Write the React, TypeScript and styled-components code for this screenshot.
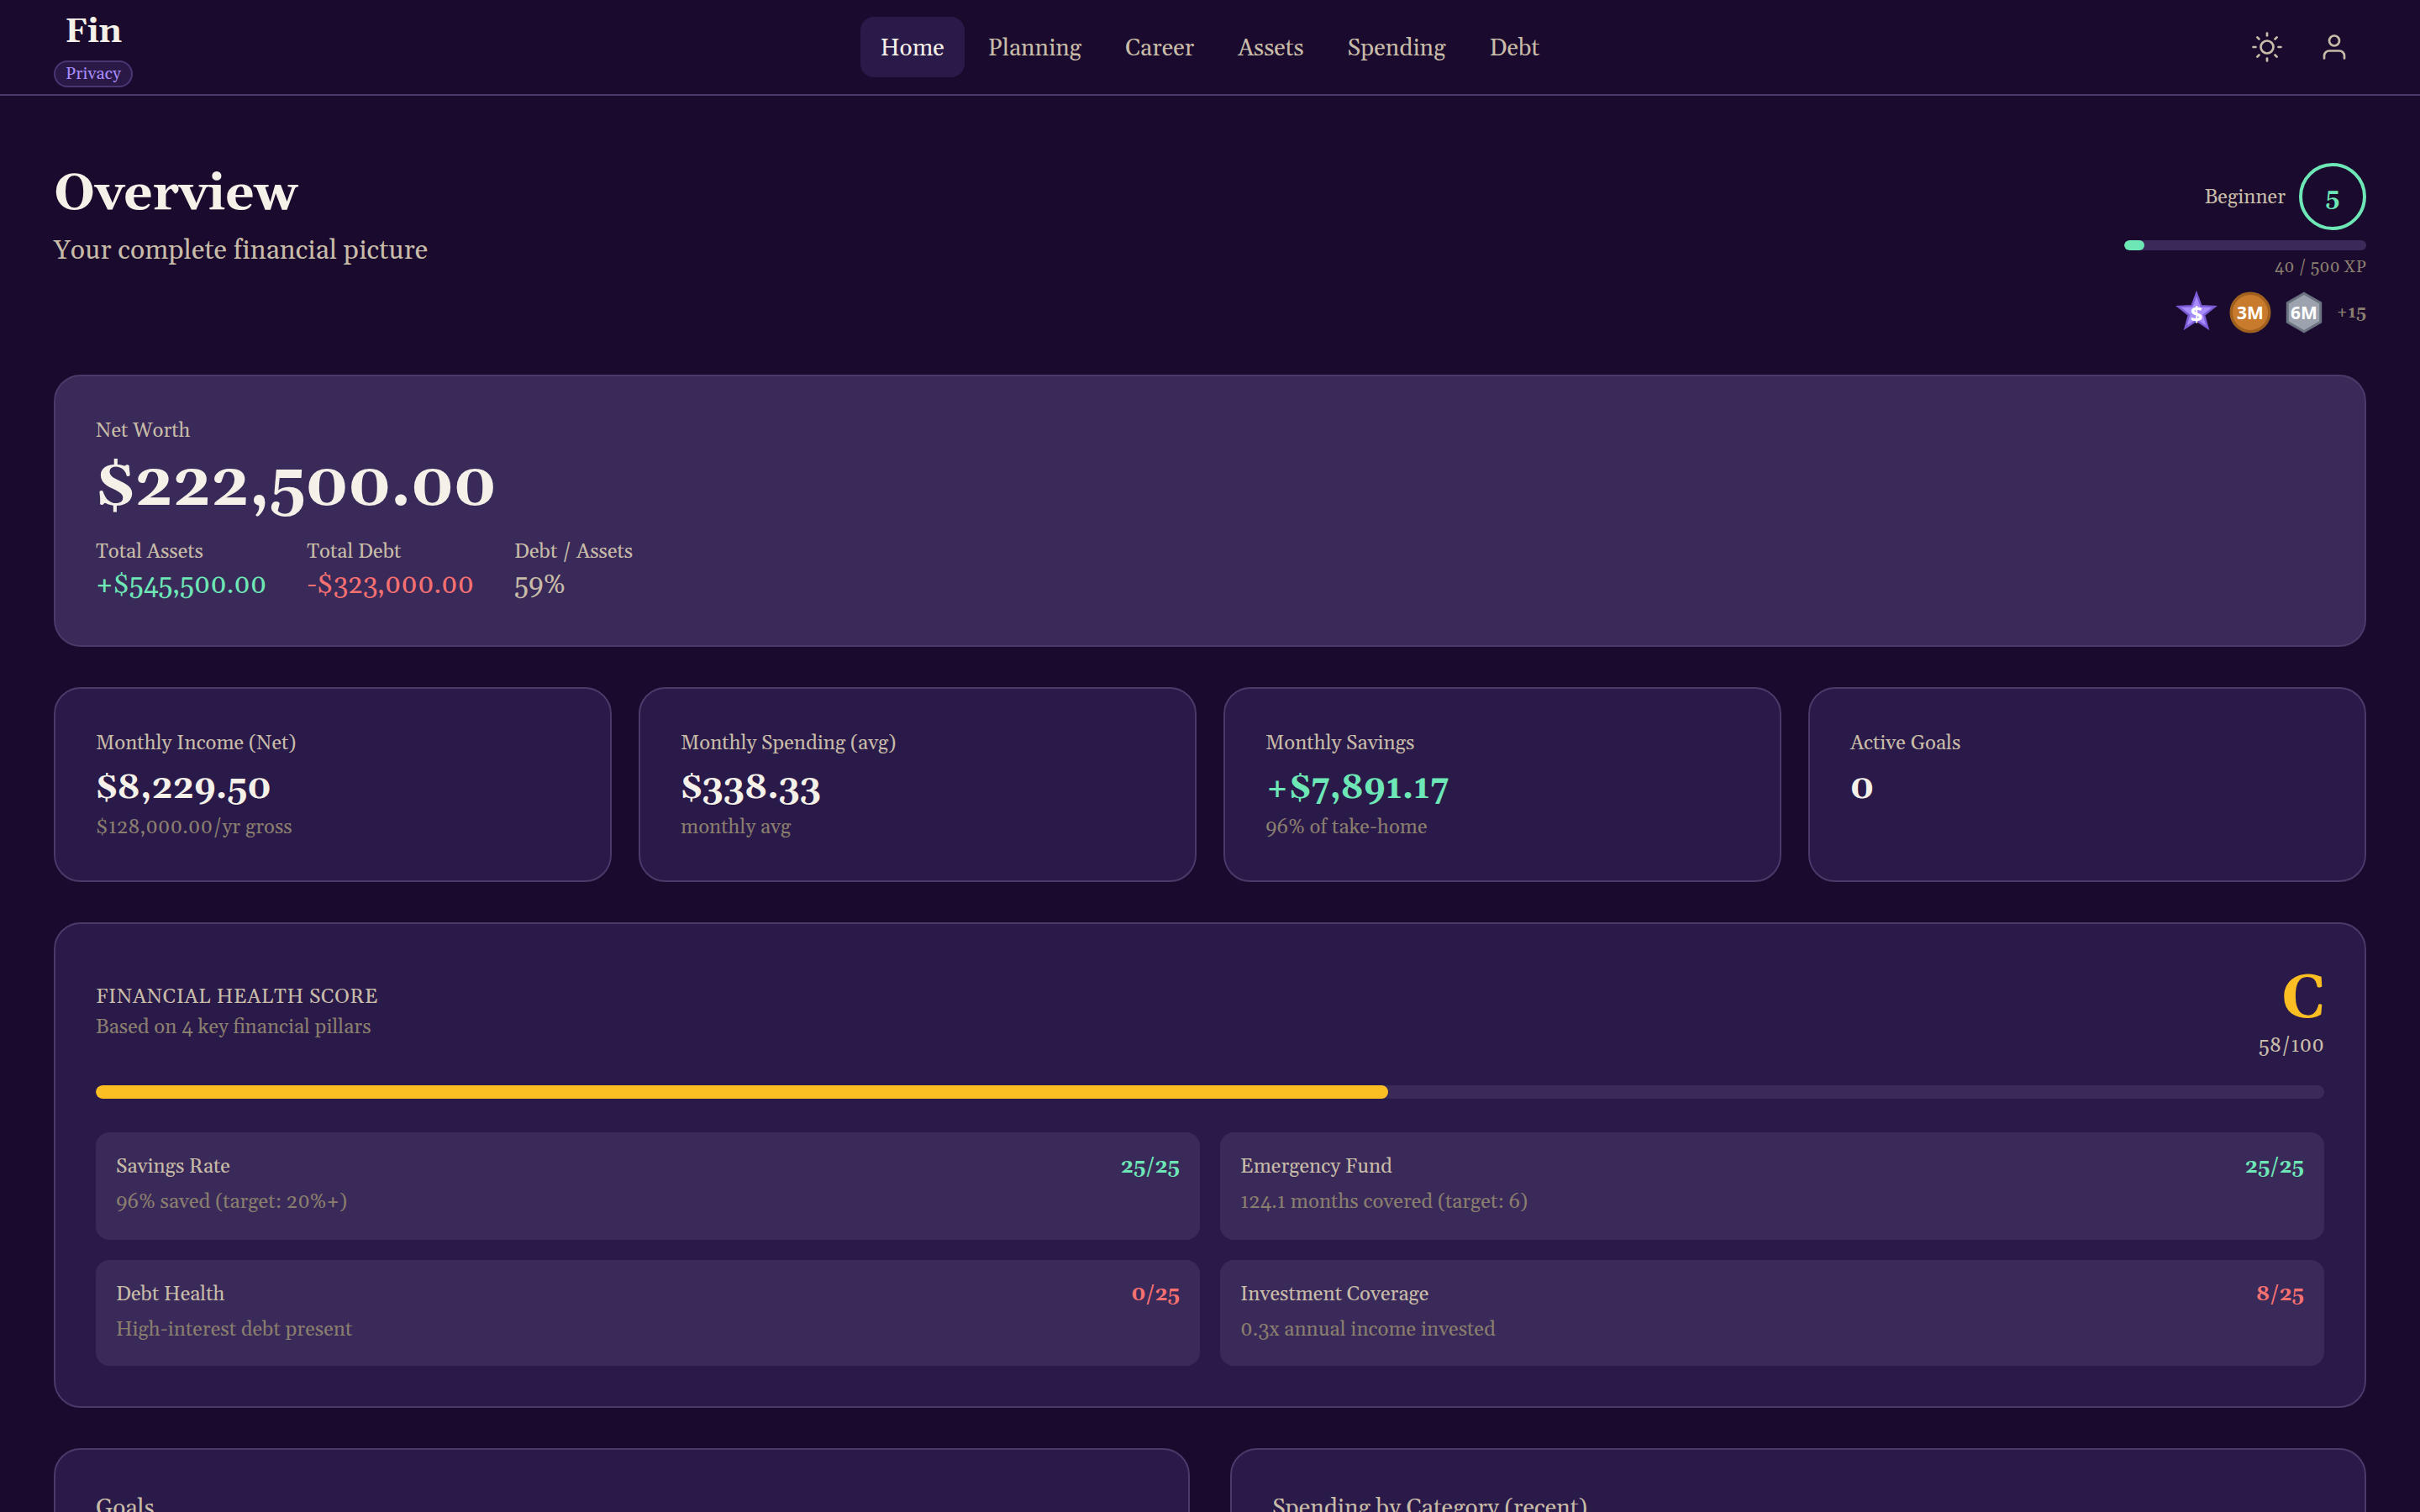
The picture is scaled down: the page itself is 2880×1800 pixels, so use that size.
import styled, { createGlobalStyle } from "styled-components";
import { FiSun, FiUser } from "react-icons/fi";

const colors = {
  bg: "#1a0a2e",
  card: "#2a1a4a",
  raised: "#3a2a5a",
  border: "#4a3a6a",
  text: "#f5f0e8",
  muted: "#c8bca8",
  dim: "#8a7e6e",
  green: "#6ee7b7",
  red: "#f87171",
  amber: "#fbbf24",
  violet: "#a78bfa",
};

const GlobalStyle = createGlobalStyle`
  * {
    box-sizing: border-box;
  }
  body {
    margin: 0;
    background-color: ${colors.bg};
    color: ${colors.text};
    font-family: Gelasio, Georgia, "Liberation Serif", serif;
    font-size: 24px;
  }
  h1, h2, p {
    margin: 0;
  }
`;

const Page = styled.div`
  height: 1800px;
  overflow: hidden;
`;

const Navbar = styled.header`
  display: grid;
  grid-template-columns: 1fr auto 1fr;
  align-items: center;
  height: 114px;
  padding: 0 64px;
  border-bottom: 2px solid ${colors.border};
`;

const Brand = styled.div`
  display: flex;
  flex-direction: column;
  align-items: center;
  justify-self: start;
  gap: 3px;
`;

const Logo = styled.span`
  padding-top: 1px;
  font-size: 40px;
  font-weight: 700;
  letter-spacing: -0.01em;
  line-height: 60px;
`;

const PrivacyBadge = styled.span`
  padding: 0 12px;
  border: 2px solid rgba(167, 139, 250, 0.25);
  border-radius: 16px;
  background-color: rgba(167, 139, 250, 0.12);
  color: ${colors.violet};
  font-size: 20px;
  letter-spacing: 0.1px;
  line-height: 28px;
`;

const NavLinks = styled.nav`
  display: flex;
  gap: 4px;
`;

const NavLink = styled.a<{ $active: boolean }>`
  height: 72px;
  padding: 3px 24px 0;
  border-radius: 16px;
  background-color: ${({ $active }) => ($active ? colors.card : "transparent")};
  color: ${({ $active }) => ($active ? colors.text : colors.muted)};
  font-size: 28px;
  line-height: 70px;
`;

const NavActions = styled.div`
  display: flex;
  justify-self: end;
  gap: 4px;
`;

const IconButton = styled.button`
  display: flex;
  align-items: center;
  justify-content: center;
  width: 76px;
  height: 76px;
  padding: 0;
  border: none;
  background: none;
  color: ${colors.muted};
  svg {
    width: 36px;
    height: 36px;
    stroke-width: 1.8;
  }
`;

const Main = styled.main`
  display: flex;
  flex-direction: column;
  gap: 48px;
  padding: 80px 64px 0;
`;

const PageHeader = styled.div`
  display: flex;
  justify-content: space-between;
  margin-bottom: -2px;
`;

const Title = styled.h1`
  font-size: 60px;
  font-weight: 700;
  letter-spacing: 0.05px;
  line-height: 75px;
`;

const Subtitle = styled.p`
  margin-top: 6px;
  color: ${colors.muted};
  font-size: 32px;
  letter-spacing: 0.04px;
  line-height: 47px;
`;

const Progress = styled.div`
  display: flex;
  flex-direction: column;
  align-items: flex-end;
  width: 288px;
`;

const Level = styled.div`
  display: flex;
  align-items: center;
  gap: 16px;
  margin-bottom: 12px;
  color: ${colors.muted};
`;

const LevelName = styled.span`
  padding-top: 2px;
`;

const LevelRing = styled.div`
  display: flex;
  align-items: center;
  justify-content: center;
  width: 80px;
  height: 80px;
  padding-top: 2px;
  border: 4px solid ${colors.green};
  border-radius: 50%;
  color: ${colors.green};
  font-size: 28px;
  font-weight: 700;
`;

const Track = styled.div<{ $size: number }>`
  width: 100%;
  height: ${({ $size }) => $size}px;
  border-radius: ${({ $size }) => $size / 2}px;
  background-color: ${colors.raised};
  overflow: hidden;
`;

const Fill = styled.div<{ $color: string }>`
  min-width: 24px;
  height: 100%;
  border-radius: inherit;
  background-color: ${({ $color }) => $color};
`;

const Xp = styled.span`
  margin: 6px 0 12px;
  color: ${colors.dim};
  font-size: 20px;
  line-height: 28px;
`;

const Badges = styled.div`
  display: flex;
  align-items: center;
  gap: 8px;
  svg {
    flex: none;
    width: 56px;
    height: 56px;
  }
  text {
    fill: #ffffff;
    font-family: "Noto Sans", "Open Sans", sans-serif;
    font-weight: 700;
    text-anchor: middle;
  }
`;

const MoreBadges = styled.span`
  width: 38px;
  color: ${colors.dim};
  font-size: 20px;
  font-weight: 700;
  line-height: 28px;
  text-align: right;
`;

const Card = styled.section<{ $raised?: boolean }>`
  padding: 48px;
  border: 2px solid ${colors.border};
  border-radius: 32px;
  background-color: ${({ $raised }) => ($raised ? colors.raised : colors.card)};
`;

const Label = styled.p`
  color: ${colors.muted};
  line-height: 34px;
`;

const NetWorth = styled.p`
  margin: 10px 0 19px;
  font-size: 72px;
  font-weight: 700;
  letter-spacing: 0.27px;
  line-height: 81px;
`;

const Totals = styled.div`
  display: flex;
  gap: 48px;
`;

const TotalValue = styled.p<{ $color: string }>`
  color: ${({ $color }) => $color};
  font-size: 32px;
  letter-spacing: -0.12px;
  line-height: 46px;
`;

const StatGrid = styled.div`
  display: grid;
  grid-template-columns: repeat(4, 1fr);
  gap: 32px;
`;

const StatValue = styled.p<{ $color?: string }>`
  margin: 8px 0 3px;
  color: ${({ $color }) => $color ?? colors.text};
  font-size: 40px;
  font-weight: 700;
  letter-spacing: 0.2px;
  line-height: 57px;
`;

const StatNote = styled.p`
  color: ${colors.dim};
  line-height: 30px;
`;

const ScoreHeader = styled.div`
  display: flex;
  align-items: center;
  justify-content: space-between;
  height: 114px;
  margin-bottom: 30px;
`;

const ScoreTitle = styled.h2`
  color: ${colors.muted};
  font-size: 24px;
  font-weight: 400;
  letter-spacing: 0.025em;
  line-height: 36px;
  text-transform: uppercase;
`;

const ScoreNote = styled.p`
  color: ${colors.dim};
  line-height: 36px;
`;

const Grade = styled.div`
  align-self: flex-start;
  text-align: right;
`;

const GradeLetter = styled.p`
  margin-right: -1px;
  color: ${colors.amber};
  font-size: 72px;
  font-weight: 700;
  line-height: 85px;
`;

const GradePoints = styled.p`
  color: ${colors.muted};
  line-height: 25px;
`;

const PillarGrid = styled.div`
  display: grid;
  grid-template-columns: 1fr 1fr;
  grid-template-rows: 128px 126px;
  gap: 24px;
  margin-top: 40px;
`;

const Pillar = styled.div`
  padding: 24px 24px 22px;
  border-radius: 16px;
  background-color: ${colors.raised};
`;

const PillarHead = styled.div`
  display: flex;
  justify-content: space-between;
  color: ${colors.muted};
  line-height: 35px;
`;

const PillarScore = styled.span<{ $color: string }>`
  color: ${({ $color }) => $color};
  font-weight: 700;
`;

const PillarNote = styled.p`
  margin-top: 4px;
  color: ${colors.dim};
  line-height: 40px;
`;

const Panels = styled.div`
  display: grid;
  grid-template-columns: 1fr 1fr;
  gap: 48px;
`;

const PanelCard = styled(Card)`
  height: 400px;
`;

const PanelTitle = styled.h2`
  color: ${colors.muted};
  font-size: 28px;
  font-weight: 400;
  line-height: 45px;
`;

const links = ["Home", "Planning", "Career", "Assets", "Spending", "Debt"];

const totals = [
  { label: "Total Assets", value: "+$545,500.00", color: colors.green },
  { label: "Total Debt", value: "-$323,000.00", color: colors.red },
  { label: "Debt / Assets", value: "59%", color: colors.muted },
];

const stats = [
  { label: "Monthly Income (Net)", value: "$8,229.50", note: "$128,000.00/yr gross" },
  { label: "Monthly Spending (avg)", value: "$338.33", note: "monthly avg" },
  { label: "Monthly Savings", value: "+$7,891.17", note: "96% of take-home", color: colors.green },
  { label: "Active Goals", value: "0" },
];

const pillars = [
  { name: "Savings Rate", points: 25, note: "96% saved (target: 20%+)" },
  { name: "Emergency Fund", points: 25, note: "124.1 months covered (target: 6)" },
  { name: "Debt Health", points: 0, note: "High-interest debt present" },
  { name: "Investment Coverage", points: 8, note: "0.3x annual income invested" },
];

// alternates outer and inner radius around the centre of a 56px badge
const starPoints = Array.from({ length: 10 }, (_, i) => {
  const r = i % 2 ? 9.5 : 22.75;
  const a = (Math.PI / 5) * i - Math.PI / 2;
  return `${(28 + r * Math.cos(a)).toFixed(2)},${(28 + r * Math.sin(a)).toFixed(2)}`;
}).join(" ");

function App() {
  const xp = 40;
  const xpTarget = 500;
  const score = 58;

  return (
    <Page>
      <GlobalStyle />
      <Navbar>
        <Brand>
          <Logo>Fin</Logo>
          <PrivacyBadge>Privacy</PrivacyBadge>
        </Brand>
        <NavLinks>
          {links.map((link) => (
            <NavLink key={link} $active={link === "Home"}>
              {link}
            </NavLink>
          ))}
        </NavLinks>
        <NavActions>
          <IconButton aria-label="Toggle theme">
            <FiSun />
          </IconButton>
          <IconButton aria-label="Account">
            <FiUser />
          </IconButton>
        </NavActions>
      </Navbar>
      <Main>
        <PageHeader>
          <div>
            <Title>Overview</Title>
            <Subtitle>Your complete financial picture</Subtitle>
          </div>
          <Progress>
            <Level>
              <LevelName>Beginner</LevelName>
              <LevelRing>5</LevelRing>
            </Level>
            <Track $size={12}>
              <Fill $color={colors.green} style={{ width: `${(xp / xpTarget) * 100}%` }} />
            </Track>
            <Xp>{`${xp} / ${xpTarget} XP`}</Xp>
            <Badges>
              <svg viewBox="0 0 56 56">
                <polygon points={starPoints} fill="#a78bfa" stroke="#7c5cd6" strokeWidth="2.4" />
                <text x="28" y="38.5" fontSize="25.7">$</text>
              </svg>
              <svg viewBox="0 0 56 56">
                <circle cx="28" cy="28" r="22.75" fill="#c97b2d" stroke="#a0611f" strokeWidth="3.5" />
                <text x="28" y="36.2" fontSize="21">3M</text>
              </svg>
              <svg viewBox="0 0 56 56">
                <polygon
                  points="28,5.25 47.7,16.6 47.7,39.4 28,50.75 8.3,39.4 8.3,16.6"
                  fill="#9ca3af"
                  stroke="#6b7280"
                  strokeWidth="3"
                />
                <text x="28" y="36.2" fontSize="21">6M</text>
              </svg>
              <MoreBadges>+15</MoreBadges>
            </Badges>
          </Progress>
        </PageHeader>

        <Card $raised>
          <Label>Net Worth</Label>
          <NetWorth>$222,500.00</NetWorth>
          <Totals>
            {totals.map(({ label, value, color }) => (
              <div key={label}>
                <Label>{label}</Label>
                <TotalValue $color={color}>{value}</TotalValue>
              </div>
            ))}
          </Totals>
        </Card>

        <StatGrid>
          {stats.map(({ label, value, note, color }) => (
            <Card key={label}>
              <Label>{label}</Label>
              <StatValue $color={color}>{value}</StatValue>
              {note ? <StatNote>{note}</StatNote> : null}
            </Card>
          ))}
        </StatGrid>

        <Card>
          <ScoreHeader>
            <div>
              <ScoreTitle>Financial Health Score</ScoreTitle>
              <ScoreNote>Based on 4 key financial pillars</ScoreNote>
            </div>
            <Grade>
              <GradeLetter>C</GradeLetter>
              <GradePoints>{`${score}/100`}</GradePoints>
            </Grade>
          </ScoreHeader>
          <Track $size={16}>
            <Fill $color={colors.amber} style={{ width: `${score}%` }} />
          </Track>
          <PillarGrid>
            {pillars.map(({ name, points, note }) => (
              <Pillar key={name}>
                <PillarHead>
                  <span>{name}</span>
                  <PillarScore $color={points > 12 ? colors.green : colors.red}>
                    {`${points}/25`}
                  </PillarScore>
                </PillarHead>
                <PillarNote>{note}</PillarNote>
              </Pillar>
            ))}
          </PillarGrid>
        </Card>

        <Panels>
          <PanelCard>
            <PanelTitle>Goals</PanelTitle>
          </PanelCard>
          <PanelCard>
            <PanelTitle>Spending by Category (recent)</PanelTitle>
          </PanelCard>
        </Panels>
      </Main>
    </Page>
  );
}

export default App;
